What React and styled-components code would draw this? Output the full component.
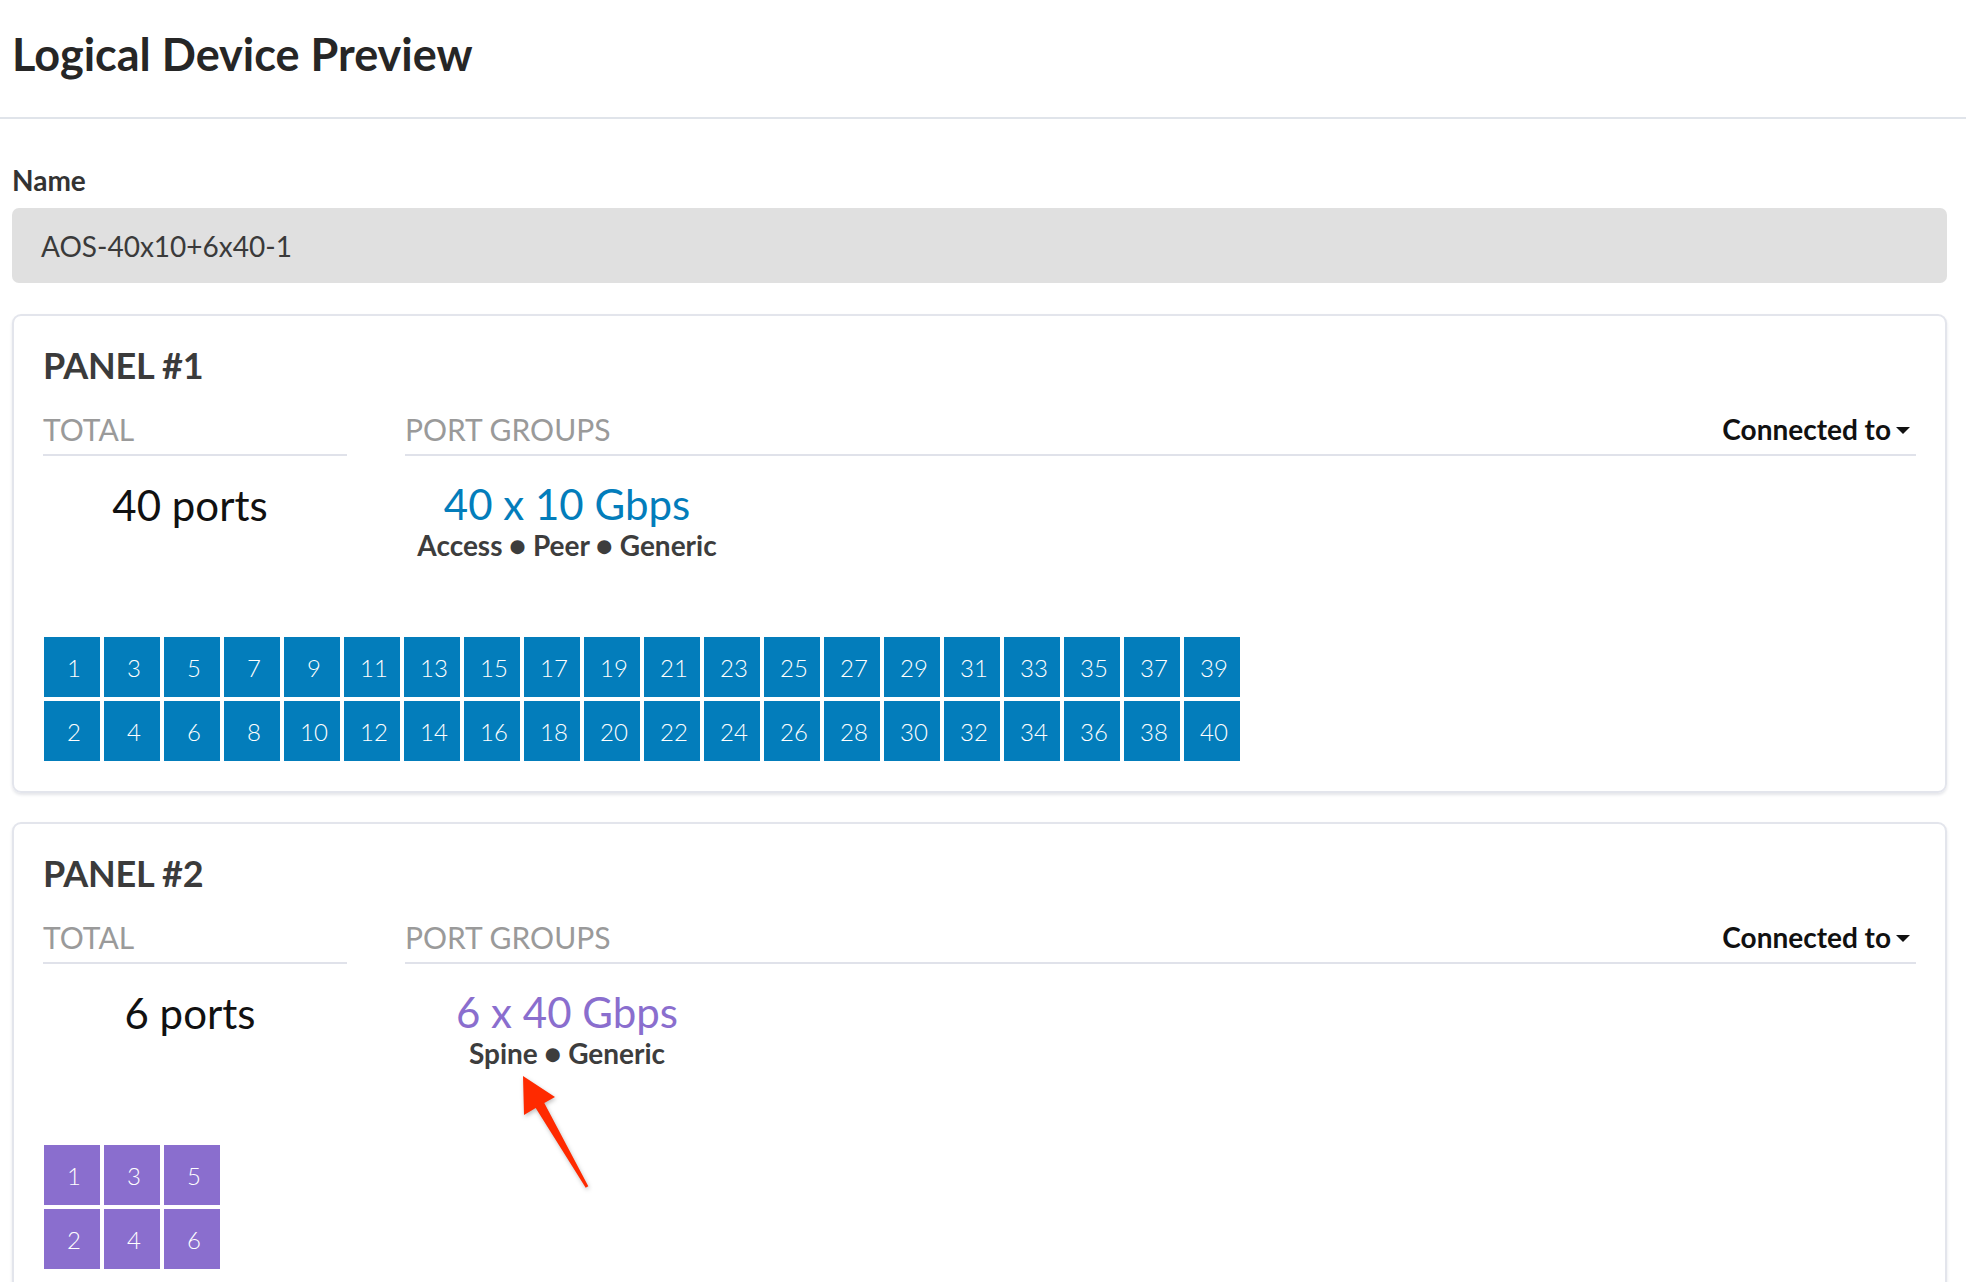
import React from 'react';
import styled, { createGlobalStyle } from 'styled-components';

const GlobalStyle = createGlobalStyle`
  body {
    margin: 0;
    background: #fff;
    font-family: Lato, "Open Sans", sans-serif;
    color: #333;
  }
`;

const Header = styled.header`
  padding: 28px 12px 36px;
  border-bottom: 2px solid #e0e4ea;

  h1 {
    margin: 0;
    font-size: 45px;
    line-height: 53px;
    font-weight: 700;
    color: #262626;
  }
`;

const Content = styled.main`
  padding: 45px 19px 40px 12px;
`;

const FieldLabel = styled.div`
  font-size: 28px;
  line-height: 32px;
  font-weight: 700;
  color: #333;
  margin-bottom: 12px;
`;

const NameInput = styled.div`
  height: 75px;
  display: flex;
  align-items: center;
  padding: 0 29px;
  background: #e0e0e0;
  border-radius: 7px;
  font-size: 28px;
  color: #3a3a3a;
`;

const Panel = styled.section`
  position: relative;
  margin-top: ${(p) => p.$gap}px;
  padding: 29px 29px 30px;
  border: 2px solid #e3e5ec;
  border-radius: 9px;
  box-shadow: 0 2px 3px rgba(40, 50, 80, 0.12);
`;

const PanelTitle = styled.h2`
  margin: 0;
  font-size: 36px;
  line-height: 41px;
  font-weight: 700;
  color: #3b3b3b;
  letter-spacing: -0.2px;
`;

const InfoRow = styled.div`
  display: flex;
  gap: 58px;
  margin-top: 25px;
`;

const TotalColumn = styled.div`
  flex: 0 0 304px;
`;

const GroupsColumn = styled.div`
  flex: 1;
`;

const ColumnHead = styled.div`
  display: flex;
  justify-content: space-between;
  align-items: center;
  height: 35px;
  padding-bottom: 8px;
  border-bottom: 2px solid #e0e2ea;
  font-size: 30px;
  color: #9a9a9a;
`;

const ConnectedTo = styled.span`
  display: flex;
  align-items: center;
  gap: 5px;
  padding-right: 6px;
  font-size: 28px;
  font-weight: 700;
  color: #111;
`;

const Caret = styled.span`
  width: 0;
  height: 0;
  margin-top: 4px;
  border-left: 7px solid transparent;
  border-right: 7px solid transparent;
  border-top: 7px solid #111;
`;

const TotalValue = styled.div`
  margin-top: 25px;
  padding-right: 10px;
  text-align: center;
  font-size: 42px;
  line-height: 48px;
  color: #111;
`;

const GroupItem = styled.div`
  width: 324px;
  margin-top: 26px;
  text-align: center;
`;

const GroupSpeed = styled.div`
  font-size: 42px;
  line-height: 45px;
  color: ${(p) => p.$color};
`;

const GroupRoles = styled.div`
  margin-top: 2px;
  font-size: 28px;
  line-height: 32px;
  font-weight: 700;
  color: #3d3d3d;
`;

const PortGrid = styled.div`
  display: grid;
  grid-auto-flow: column;
  grid-template-rows: repeat(2, 60px);
  grid-auto-columns: 56px;
  gap: 4px;
  margin-top: 76px;
  margin-left: 1px;
`;

const Port = styled.div`
  display: flex;
  align-items: center;
  justify-content: center;
  padding-left: 4px;
  background: ${(p) => p.$color};
  color: #fff;
  font-size: 24px;
  font-weight: 300;
`;

const Arrow = styled.svg`
  position: absolute;
  left: 486px;
  top: 246px;
  filter: drop-shadow(1px 2px 2px rgba(0, 0, 0, 0.25));
`;

const BLUE = '#037dbb';
const PURPLE = '#8a6ece';

const panels = [
  {
    name: 'PANEL #1',
    count: 40,
    speed: '40 x 10 Gbps',
    roles: 'Access ● Peer ● Generic',
    color: BLUE,
  },
  {
    name: 'PANEL #2',
    count: 6,
    speed: '6 x 40 Gbps',
    roles: 'Spine ● Generic',
    color: PURPLE,
    arrow: true,
  },
];

export default () => {
  return (
    <>
      <GlobalStyle />
      <Header>
        <h1>Logical Device Preview</h1>
      </Header>
      <Content>
        <FieldLabel>Name</FieldLabel>
        <NameInput>AOS-40x10+6x40-1</NameInput>
        {panels.map((panel, i) => (
          <Panel key={panel.name} $gap={i === 0 ? 31 : 29}>
            <PanelTitle>{panel.name}</PanelTitle>
            <InfoRow>
              <TotalColumn>
                <ColumnHead>TOTAL</ColumnHead>
                <TotalValue>{panel.count} ports</TotalValue>
              </TotalColumn>
              <GroupsColumn>
                <ColumnHead>
                  PORT GROUPS
                  <ConnectedTo>
                    Connected to <Caret />
                  </ConnectedTo>
                </ColumnHead>
                <GroupItem>
                  <GroupSpeed $color={panel.color}>{panel.speed}</GroupSpeed>
                  <GroupRoles>{panel.roles}</GroupRoles>
                </GroupItem>
              </GroupsColumn>
            </InfoRow>
            <PortGrid>
              {Array.from({ length: panel.count }, (_, n) => (
                <Port key={n} $color={panel.color}>
                  {n + 1}
                </Port>
              ))}
            </PortGrid>
            {panel.arrow && (
              <Arrow width="100" height="125" viewBox="0 0 100 125">
                <polygon
                  points="23,6 55,27 44.3,33 88.3,116.3 85.7,117.7 35.7,38 24,45"
                  fill="#ff2a00"
                />
              </Arrow>
            )}
          </Panel>
        ))}
      </Content>
    </>
  );
};
